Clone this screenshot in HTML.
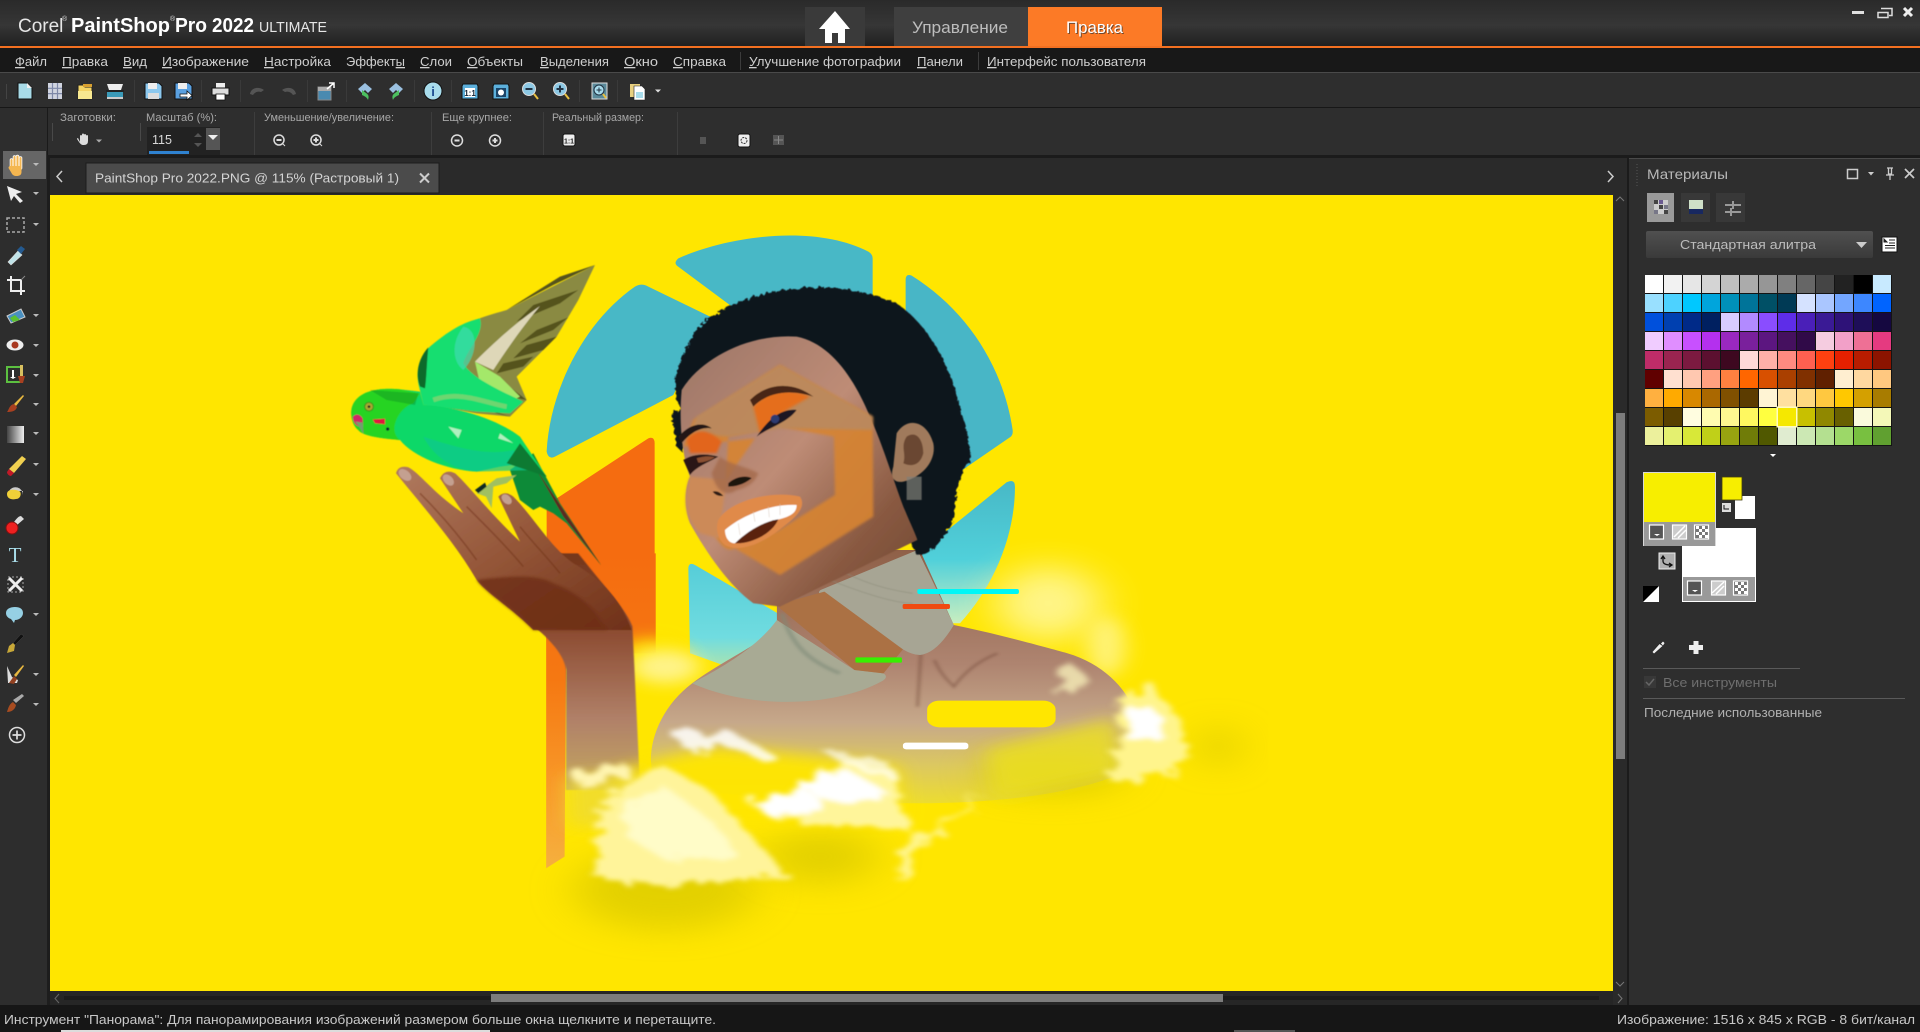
<!DOCTYPE html>
<html><head><meta charset="utf-8"><title>PaintShop Pro 2022</title>
<style>
html,body{margin:0;padding:0;background:#2d2d2d;width:1920px;height:1032px;overflow:hidden}
svg{position:absolute;left:0;top:0;font-family:"Liberation Sans",sans-serif}
#pal{position:absolute;left:1645px;top:275px;width:247px;height:171px;background:#141414;display:grid;grid-template-columns:repeat(13,18px);grid-auto-rows:18px;gap:1px;padding:0 0 0 0}
#pal i{display:block}
#pal i.s{box-shadow:0 0 0 1.5px #fffbc0;position:relative}
</style></head><body>
<svg width="1920" height="1032" viewBox="0 0 1920 1032" xmlns="http://www.w3.org/2000/svg">
<defs>
<linearGradient id="tg" x1="0" y1="0" x2="0" y2="1"><stop offset="0" stop-color="#2a2a2a"/><stop offset=".55" stop-color="#363636"/><stop offset="1" stop-color="#202020"/></linearGradient>
<linearGradient id="dd" x1="0" y1="0" x2="0" y2="1"><stop offset="0" stop-color="#505050"/><stop offset="1" stop-color="#3a3a3a"/></linearGradient>
<linearGradient id="gradT" x1="0" y1="0" x2="1" y2="0"><stop offset="0" stop-color="#444"/><stop offset="1" stop-color="#eee"/></linearGradient>
<linearGradient id="tealF" x1="0" y1="0" x2="0" y2="1"><stop offset="0" stop-color="#48b8c6"/><stop offset=".55" stop-color="#50d0da"/><stop offset="1" stop-color="#c8eec0"/></linearGradient>
<linearGradient id="tealG" x1="0" y1="0" x2="0" y2="1"><stop offset="0" stop-color="#56cdd8"/><stop offset=".6" stop-color="#70dce0"/><stop offset="1" stop-color="#d0e890"/></linearGradient>
<linearGradient id="org" gradientUnits="userSpaceOnUse" x1="0" y1="-20" x2="0" y2="925"><stop offset="0" stop-color="#f56c10"/><stop offset=".4" stop-color="#f57812"/><stop offset=".75" stop-color="#f89a2a"/><stop offset="1" stop-color="#f6b040"/></linearGradient>
<linearGradient id="face" x1="0" y1="0" x2="1" y2="1"><stop offset="0" stop-color="#9c7668"/><stop offset=".45" stop-color="#be8c76"/><stop offset=".75" stop-color="#8a5a42"/><stop offset="1" stop-color="#6e4630"/></linearGradient>
<linearGradient id="arm" x1="0" y1="0" x2="0" y2="1"><stop offset="0" stop-color="#74361c"/><stop offset=".35" stop-color="#8e4e34"/><stop offset=".7" stop-color="#b08068"/><stop offset="1" stop-color="#c4a860"/></linearGradient>
<linearGradient id="hand" x1="0" y1="0" x2="1" y2="1"><stop offset="0" stop-color="#b07a60"/><stop offset=".5" stop-color="#945638"/><stop offset="1" stop-color="#6e3018"/></linearGradient>
<linearGradient id="chest" x1="0" y1="0" x2="0" y2="1"><stop offset="0" stop-color="#8f6048"/><stop offset=".45" stop-color="#ae8470"/><stop offset=".68" stop-color="#c6a88a"/><stop offset=".85" stop-color="#dcc860"/><stop offset="1" stop-color="#ecdc30"/></linearGradient>
<filter id="b1" x="-10%" y="-10%" width="120%" height="120%"><feGaussianBlur stdDeviation="1.6"/></filter>
<filter id="b3" x="-30%" y="-30%" width="160%" height="160%"><feGaussianBlur stdDeviation="4"/></filter>
<filter id="b8" x="-50%" y="-50%" width="200%" height="200%"><feGaussianBlur stdDeviation="12"/></filter>
<filter id="b20" x="-60%" y="-60%" width="220%" height="220%"><feGaussianBlur stdDeviation="22"/></filter>
<filter id="b40" x="-80%" y="-80%" width="260%" height="260%"><feGaussianBlur stdDeviation="45"/></filter>
<filter id="cl" x="-30%" y="-30%" width="160%" height="160%"><feTurbulence type="fractalNoise" baseFrequency=".03" numOctaves="4" seed="4"/><feDisplacementMap in="SourceGraphic" scale="60"/><feGaussianBlur stdDeviation="7"/></filter>
<filter id="hr" x="-10%" y="-10%" width="120%" height="120%"><feTurbulence type="fractalNoise" baseFrequency=".09" numOctaves="2" seed="7"/><feDisplacementMap in="SourceGraphic" scale="16"/><feGaussianBlur stdDeviation="1.5"/></filter>
</defs>

<!-- chrome -->
<rect width="1920" height="46" fill="url(#tg)"/>
<rect y="46" width="1920" height="2" fill="#f37021"/>
<rect y="48" width="1920" height="24" fill="#181818"/>
<rect y="72" width="1920" height="1" fill="#4a4a4a"/>
<rect y="73" width="1920" height="34" fill="#2e2e2e"/>
<rect y="107" width="1920" height="1" fill="#171717"/>
<rect y="108" width="1920" height="47" fill="#2e2e2e"/>
<rect y="155" width="1920" height="3" fill="#1b1b1b"/>
<rect x="48" y="158" width="1581" height="37" fill="#2a2a2a"/>
<rect x="47" y="108" width="1" height="47" fill="#1a1a1a"/>
<rect x="0" y="108" width="47" height="897" fill="#2d2d2d"/>
<rect x="47" y="155" width="3" height="850" fill="#1d1d1d"/>

<!-- title -->
<text y="32" font-size="19" fill="#e6e6e6"><tspan x="18">Corel</tspan></text>
<text x="62" y="21" font-size="7" fill="#ddd">®</text>
<text x="71" y="32" font-size="20" font-weight="bold" fill="#fff" textLength="99" lengthAdjust="spacingAndGlyphs">PaintShop</text>
<text x="170" y="21" font-size="7" fill="#ddd">®</text>
<text x="175" y="32" font-size="20" font-weight="bold" fill="#fff" textLength="32" lengthAdjust="spacingAndGlyphs">Pro</text>
<text x="212" y="32" font-size="20" font-weight="bold" fill="#fff" textLength="42" lengthAdjust="spacingAndGlyphs">2022</text>
<text x="259" y="32" font-size="15" fill="#e6e6e6" textLength="68" lengthAdjust="spacingAndGlyphs">ULTIMATE</text>

<!-- nav tabs -->
<rect x="805" y="7" width="60" height="39" fill="#3a3a3a"/>
<path d="M835 11 L850 29 H845 V43 H838 V33 H832 V43 H825 V29 H819Z" fill="#fff"/>
<rect x="894" y="7" width="134" height="39" fill="#3f3f3f"/>
<text x="912" y="33" font-size="17" fill="#bdbdbd" textLength="96" lengthAdjust="spacingAndGlyphs">Управление</text>
<rect x="1028" y="7" width="134" height="39" fill="#fc7a26"/>
<text x="1066" y="33" font-size="17" fill="#333" opacity=".7" textLength="57" lengthAdjust="spacingAndGlyphs" transform="translate(1,1)">Правка</text>
<text x="1066" y="33" font-size="17" fill="#fff" textLength="57" lengthAdjust="spacingAndGlyphs">Правка</text>

<!-- window buttons -->
<rect x="1852" y="11" width="12" height="3" fill="#e0e0e0"/>
<path d="M1881 8.5h11v7h-3M1878 12.5h10v5h-10z" fill="none" stroke="#ddd" stroke-width="1.5"/>
<path d="M1904 8l8 8M1912 8l-8 8" stroke="#eee" stroke-width="3"/>

<!-- menu -->
<g font-size="13" fill="#cfcfcf">
<text x="15" y="66" textLength="32" lengthAdjust="spacingAndGlyphs"><tspan text-decoration="underline">Ф</tspan>айл</text>
<text x="62" y="66" textLength="46" lengthAdjust="spacingAndGlyphs"><tspan text-decoration="underline">П</tspan>равка</text>
<text x="123" y="66" textLength="24" lengthAdjust="spacingAndGlyphs"><tspan text-decoration="underline">В</tspan>ид</text>
<text x="162" y="66" textLength="87" lengthAdjust="spacingAndGlyphs"><tspan text-decoration="underline">И</tspan>зображение</text>
<text x="264" y="66" textLength="67" lengthAdjust="spacingAndGlyphs"><tspan text-decoration="underline">Н</tspan>астройка</text>
<text x="346" y="66" textLength="59" lengthAdjust="spacingAndGlyphs">Эффект<tspan text-decoration="underline">ы</tspan></text>
<text x="420" y="66" textLength="32" lengthAdjust="spacingAndGlyphs"><tspan text-decoration="underline">С</tspan>лои</text>
<text x="467" y="66" textLength="56" lengthAdjust="spacingAndGlyphs"><tspan text-decoration="underline">О</tspan>бъекты</text>
<text x="540" y="66" textLength="69" lengthAdjust="spacingAndGlyphs"><tspan text-decoration="underline">В</tspan>ыделения</text>
<text x="624" y="66" textLength="34" lengthAdjust="spacingAndGlyphs"><tspan text-decoration="underline">О</tspan>кно</text>
<text x="673" y="66" textLength="53" lengthAdjust="spacingAndGlyphs"><tspan text-decoration="underline">С</tspan>правка</text>
<text x="749" y="66" textLength="152" lengthAdjust="spacingAndGlyphs"><tspan text-decoration="underline">У</tspan>лучшение фотографии</text>
<text x="917" y="66" textLength="46" lengthAdjust="spacingAndGlyphs"><tspan text-decoration="underline">П</tspan>анели</text>
<text x="987" y="66" textLength="159" lengthAdjust="spacingAndGlyphs"><tspan text-decoration="underline">И</tspan>нтерфейс пользователя</text>
</g>
<rect x="740" y="52" width="1" height="18" fill="#3c3c3c"/><rect x="978" y="52" width="1" height="18" fill="#3c3c3c"/>

<!-- toolbar icons -->
<g>
<path d="M18 83h9l5 5v11H18z" fill="#a8dbe8" stroke="#101010"/><path d="M27 83v5h5z" fill="#f0f0f0"/>
<rect x="48" y="83" width="14" height="16" fill="#d0d4e0"/><path d="M52.500 83v16M57.500 83v16M48 88.300h14M48 93.600h14" stroke="#7e88a8" stroke-width="1.200"/>
<path d="M78 85h6l1 2h7v12H78z" fill="#f5d565" stroke="#222"/><path d="M78 91h14v8H78z" fill="#f8e890"/><rect x="83" y="84" width="9" height="3" fill="#d8a030"/>
<path d="M107 84h16l-2 6h-12z" fill="#eee"/><rect x="106" y="90" width="18" height="2" fill="#222"/><rect x="107" y="92" width="16" height="6" fill="#3a9ab8"/><rect x="107" y="97" width="16" height="2" fill="#ccc"/>
<path d="M145 83h14l3 3v13h-17z" fill="#8cc8ee" stroke="#111"/><rect x="148" y="83" width="9" height="6" fill="#eee"/><rect x="148" y="93" width="11" height="6" fill="#ddd"/>
<path d="M175 83h14l3 3v13h-17z" fill="#5aa0e0" stroke="#111"/><rect x="178" y="83" width="9" height="6" fill="#eee"/><path d="M180 94h7v-3l5 4.500-5 4.500v-3h-7z" fill="#fff" stroke="#111" stroke-width=".8"/>
<rect x="216" y="83" width="9" height="5" fill="#eee"/><rect x="212" y="88" width="17" height="7" fill="#ddd" stroke="#111"/><rect x="216" y="94" width="9" height="6" fill="#fff" stroke="#111" stroke-width=".8"/>
<path d="M250 94c1-6 8-8 14-4l-3 2c-3-1-6 0-8 3z" fill="#555"/><path d="M296 94c-1-6-8-8-14-4l3 2c3-1 6 0 8 3z" fill="#555"/>
<rect x="318" y="87" width="13" height="13" fill="#4a8ab0" stroke="#888"/><rect x="318" y="87" width="13" height="4" fill="#aaa"/><path d="M327 89l7-6M329 83h5v5" stroke="#fff" stroke-width="1.500" fill="none"/>
<path d="M358 89l7-6 7 6-4 4-3-3-3 3z" fill="#9ac0e0"/><path d="M362 90l4 3c3 2 3 4 2 7-1-3-4-4-6-5z" fill="#4cc060"/>
<path d="M403 89l-7-6-7 6 4 4 3-3 3 3z" fill="#9ac0e0"/><path d="M399 90l-4 3c-3 2-3 4-2 7 1-3 4-4 6-5z" fill="#4cc060"/>
<circle cx="433" cy="91" r="9" fill="#a8dcec" stroke="#111"/><text x="433" y="96" font-size="13" font-weight="bold" text-anchor="middle" fill="#1a4a90">i</text>
<path d="M463 84h14l1 2v13h-16V86z" fill="#5cb0dc" stroke="#111"/><rect x="465" y="88" width="10" height="9" fill="#fff"/><text x="470" y="96" font-size="8" font-weight="bold" text-anchor="middle" fill="#123">1:1</text>
<path d="M494 84h14l1 2v13h-16V86z" fill="#5cb0dc" stroke="#111"/><rect x="496" y="88" width="10" height="9" fill="#1a4468"/><circle cx="501" cy="92.500" r="3" fill="#fff"/>
<circle cx="529" cy="89" r="6.500" fill="#8cc8e4" stroke="#ddd"/><rect x="525.500" y="88" width="7" height="2" fill="#234"/><path d="M534 94l4 5" stroke="#e8c040" stroke-width="2"/>
<circle cx="560" cy="89" r="6.500" fill="#8cc8e4" stroke="#ddd"/><path d="M556.500 89h7M560 85.500v7" stroke="#234" stroke-width="2"/><path d="M565 94l4 5" stroke="#e8c040" stroke-width="2"/>
<rect x="592" y="83" width="15" height="16" fill="#5a8a9a" stroke="#ddd"/><circle cx="599" cy="90" r="5" fill="#a8dcec" stroke="#234"/><path d="M596.500 90h5M599 87.500v5" stroke="#234"/><path d="M603 94l3 4" stroke="#e8c040" stroke-width="2"/>
<rect x="630" y="84" width="10" height="13" fill="#e8d080"/><path d="M634 86h8l3 3v11h-11z" fill="#fff" stroke="#222" stroke-width=".6"/><rect x="636" y="92" width="7" height="6" fill="#a8dcec"/>
<path d="M655 89.500h6l-3 3z" fill="#ddd"/>
</g>
<g><rect x="6" y="84" width="1" height="15" fill="#444"/><rect x="134" y="80" width="1" height="22" fill="#3a3a3a"/><rect x="201" y="80" width="1" height="22" fill="#3a3a3a"/><rect x="240" y="80" width="1" height="22" fill="#3a3a3a"/><rect x="307" y="80" width="1" height="22" fill="#3a3a3a"/><rect x="346" y="80" width="1" height="22" fill="#3a3a3a"/><rect x="414" y="80" width="1" height="22" fill="#3a3a3a"/><rect x="451" y="80" width="1" height="22" fill="#3a3a3a"/><rect x="579" y="80" width="1" height="22" fill="#3a3a3a"/><rect x="617" y="80" width="1" height="22" fill="#3a3a3a"/></g>

<!-- options -->
<g font-size="11" fill="#a8a8a8">
<text x="60" y="121" textLength="56" lengthAdjust="spacingAndGlyphs">Заготовки:</text>
<text x="146" y="121" textLength="71" lengthAdjust="spacingAndGlyphs">Масштаб (%):</text>
<text x="264" y="121" textLength="130" lengthAdjust="spacingAndGlyphs">Уменьшение/увеличение:</text>
<text x="442" y="121" textLength="70" lengthAdjust="spacingAndGlyphs">Еще крупнее:</text>
<text x="552" y="121" textLength="92" lengthAdjust="spacingAndGlyphs">Реальный размер:</text>
</g>
<g fill="#3d3d3d"><rect x="254" y="112" width="1" height="43"/><rect x="431" y="112" width="1" height="43"/><rect x="543" y="112" width="1" height="43"/><rect x="677" y="112" width="1" height="43"/></g>
<path d="M80 142v-6q0-1 1-1t1 1v-1.500q0-1 1-1t1 1v.500q0-1 1-1t1 1v1q0-1 1-1t1 1v5q0 4-4 4h-1q-2 0-4-3l-2-3q0-1 1-1z" fill="#ddd"/>
<path d="M96 139.500h6l-3 3z" fill="#aaa"/>
<g fill="#555"><rect x="52" y="123" width="1" height="18" opacity=".7"/><rect x="140" y="123" width="1" height="18" opacity=".7"/></g>
<rect x="147" y="127" width="73" height="28" fill="#222"/>
<text x="152" y="144" font-size="13" fill="#d8d8d8" textLength="20" lengthAdjust="spacingAndGlyphs">115</text>
<rect x="149" y="151" width="40" height="3" fill="#2f82d0"/>
<path d="M194 137l4-4 4 4zM194 143l4 4 4-4z" fill="#555"/>
<rect x="206" y="128" width="14" height="22" fill="#555"/><path d="M208 135h10l-5 5z" fill="#eee"/>
<g fill="none" stroke="#ddd" stroke-width="1.500">
<circle cx="279" cy="140" r="5"/><path d="M276.500 140h5" stroke-width="2"/><path d="M283 144l2 2" stroke-width="1"/>
<circle cx="316" cy="140" r="5"/><path d="M313.500 140h5M316 137.500v5" stroke-width="2"/><path d="M320 144l2 2" stroke-width="1"/>
<circle cx="457" cy="140.500" r="5.500"/><path d="M454.500 140.500h5" stroke-width="2"/>
<circle cx="495" cy="140.500" r="5.500"/><path d="M492.500 140.500h5M495 138v5" stroke-width="2"/></g>
<rect x="563" y="134" width="12" height="12" rx="2" fill="#eee" stroke="#111"/><text x="569" y="143.500" font-size="7" font-weight="bold" text-anchor="middle" fill="#222">1:1</text>
<rect x="700" y="137" width="6" height="7" fill="#555"/>
<rect x="738" y="134" width="12" height="13" rx="2" fill="#eee" stroke="#111"/><circle cx="744" cy="140.500" r="3" fill="none" stroke="#333" stroke-dasharray="2 1"/>
<rect x="773" y="135" width="11" height="10" fill="#555"/><path d="M778.500 136v8M774 140h9" stroke="#888"/>

<!-- tab row -->
<path d="M62 171l-5 5.500 5 5.500" fill="none" stroke="#ccc" stroke-width="1.500"/>
<path d="M1608 171l5 5.500-5 5.500" fill="none" stroke="#ccc" stroke-width="1.500"/>
<rect x="86" y="163" width="353" height="30" fill="#4b4b4b" stroke="#1c1c1c"/>
<text x="95" y="182.500" font-size="13" fill="#d4d4d4" textLength="304" lengthAdjust="spacingAndGlyphs">PaintShop Pro 2022.PNG @ 115% (Растровый 1)</text>
<path d="M420 173.500l9 9M429 173.500l-9 9" stroke="#ccc" stroke-width="2"/>

<!-- CANVAS -->
<rect x="50" y="195" width="1563" height="796" fill="#ffe600"/>
<svg x="50" y="195" width="1563" height="796" viewBox="50 195 1563 796">
<!-- teal (zoom9 coords) -->
<g transform="translate(640,220) scale(.3333)">
<path d="M115 115 C260 50 520 10 685 95 Q698 102 698 115 L698 300 L330 300 L112 138 Q100 128 115 115Z" fill="#48b8c6"/>
<path d="M797 180 Q797 160 815 167 C980 270 1090 440 1118 630 Q1120 645 1110 652 L960 755 L797 600Z" fill="#48b6c6"/>
<path d="M1100 787 Q1125 775 1125 800 C1125 950 1060 1100 960 1210 L880 1210 L800 1030Z" fill="url(#tealF)"/>
<path d="M145 1045 Q146 1025 165 1035 L430 1190 L430 1400 L150 1300Z" fill="url(#tealG)"/>
</g>
<!-- orange shape + teal seg 1 (zoom8 coords) -->
<g transform="translate(320,230) scale(.3333)">
<path d="M945 170 Q965 158 985 170 L1175 262 L1060 495 L705 680 Q685 690 680 665 C690 470 800 270 945 170Z" fill="#48b8c6"/>
<path d="M985 625 Q1004 618 1004 640 L1004 1260 L680 1260 L680 825Z" fill="#f56c10"/>
</g>
<g transform="translate(520,560) scale(.4847,.3333)">
<path d="M54 -20 L280 -20 L280 280 L95 280 L92 890 L54 925Z" fill="url(#org)"/>
</g>
<!-- soft haze behind -->
<g transform="translate(520,560) scale(.4847,.3333)">
<ellipse cx="270" cy="290" rx="70" ry="55" fill="#ffe600" opacity=".95" filter="url(#b20)"/>
<ellipse cx="300" cy="320" rx="70" ry="50" fill="#fff6a0" opacity=".85" filter="url(#b20)"/>
<ellipse cx="1090" cy="130" rx="110" ry="110" fill="#fff8a0" opacity=".85" filter="url(#b40)"/>
<ellipse cx="1210" cy="260" rx="40" ry="90" fill="#fff590" opacity=".8" filter="url(#b20)"/>
</g>
<!-- body -->
<g transform="translate(520,560) scale(.4847,.3333)">
<path d="M530 130 L620 -30 L825 -30 L895 195 C980 220 1080 260 1130 280 C1200 310 1250 380 1270 460 L1270 620 C1200 680 1040 730 820 730 C620 730 400 700 275 680 L270 600 C270 520 300 430 355 370 C420 300 500 250 530 200Z" fill="url(#chest)"/>
<g filter="url(#b3)" fill="none" opacity=".45">
<path d="M827 280 L820 440" stroke="#5a3020" stroke-width="5"/>
<path d="M855 300 C870 350 890 370 895 380 C920 330 950 300 985 280" stroke="#6a4030" stroke-width="6"/>
</g>
<!-- grey-green teal overlays -->
<path d="M620 90 L820 -30 L895 195 Q860 280 825 285 Q810 285 790 268 L630 115 Q610 100 620 90Z" fill="#a7a594"/>
<path d="M530 180 L690 330 L750 340 Q762 352 745 365 C650 440 480 450 355 370 C420 320 490 260 530 180Z" fill="#a8aa94"/>
<path d="M528 135 L628 95 L790 268 L750 340 L690 330Z" fill="#ab7144"/>
<path d="M540 160 C560 250 590 300 660 340" stroke="#7e8a78" stroke-width="10" fill="none" opacity=".6" filter="url(#b3)"/>
<path d="M640 60 C690 90 770 130 810 130 M660 30 C710 70 760 90 810 100" stroke="#8a8a78" stroke-width="3" fill="none" opacity=".5" filter="url(#b1)"/>
<!-- forearm -->
<path d="M0 165 C40 210 90 270 95 330 L95 690 L248 690 L232 200 C220 150 180 90 120 -20 L0 -20Z" fill="url(#arm)" filter="url(#b1)"/>
</g>
<!-- hair + face (zoom9 coords) -->
<g transform="translate(640,220) scale(.3333)">
<path filter="url(#hr)" d="M110 540 C90 470 130 400 170 330 C220 270 320 230 400 215 C520 190 650 200 770 250 C860 310 930 430 960 560 C985 650 995 700 990 725 C950 770 950 830 940 900 C900 980 860 1010 830 1005 L700 720 L200 700Z" fill="#11141b"/>
<path filter="url(#hr)" d="M95 580 L135 560 L130 700 L110 680Z" fill="#11141b"/>
<g filter="url(#b1)">
<path d="M125 510 C180 420 320 340 470 350 C570 370 640 470 690 590 C730 680 760 780 790 860 C820 930 830 950 832 960 L420 1160 L340 1150 C270 1100 200 1000 150 910 C130 860 135 800 150 770 C130 720 115 620 125 510Z" fill="url(#face)"/>
<!-- ear -->
<path d="M770 640 C800 590 860 600 880 670 C890 720 850 770 790 785 C760 790 750 770 760 740Z" fill="#a07a5c"/>
<path d="M800 650 C830 630 850 660 850 700 C840 740 810 740 790 730 C800 700 780 680 800 650Z" fill="#6a4630"/>
<rect x="800" y="770" width="45" height="70" fill="#7f7f78" opacity=".7"/>
<!-- orange hex -->
<path filter="url(#b3)" d="M420 435 L698 590 L700 890 L420 1065 L285 985 C260 1000 240 970 225 950 L410 935 L585 825 L582 650 L420 620 L265 650 L258 780 L345 655 L130 680 L160 600Z" fill="#d78432" opacity=".9"/>
<path filter="url(#b3)" d="M420 435 L698 590 L698 630 L420 625 L265 650 L150 640 L170 590Z" fill="#b88a62" opacity=".85"/>
<!-- cheek -->
<path d="M150 770 C125 850 140 900 180 940 L235 955 L260 780Z" fill="#cc8a58" filter="url(#b3)"/>
<!-- eye shadows -->
<path d="M140 660 C170 620 210 630 245 665 L230 700 L150 700Z" fill="#e2651e" filter="url(#b3)"/>
<path d="M340 560 C390 500 470 510 510 530 L440 570 L360 640Z" fill="#e56e1c" filter="url(#b3)"/>
<!-- brows -->
<path d="M115 650 C150 610 190 605 215 625 C180 620 150 640 125 670Z" fill="#241812"/>
<path d="M330 540 C390 480 470 490 520 530 C460 510 390 510 340 560Z" fill="#4a2612"/>
<!-- eyes -->
<path d="M350 650 C390 590 430 565 470 570 C440 610 390 620 350 650Z" fill="#1a1420"/><circle cx="405" cy="597" r="13" fill="#2e3a70"/>
<path d="M130 720 C160 700 200 700 235 710 C200 730 170 740 150 765Z" fill="#2a1812"/><path d="M170 715 Q200 705 225 712 Q200 728 175 728Z" fill="#8a5030"/>
<!-- nose -->
<path d="M215 760 C230 820 260 830 290 810 C340 800 350 770 355 760 C320 740 260 730 240 710Z" fill="#a46a4c" opacity=".8" filter="url(#b3)"/>
<path d="M265 790 C285 770 320 765 335 775 C310 795 285 800 265 800Z" fill="#1e1210"/>
<path d="M218 815 Q235 810 250 828 Q228 830 218 815Z" fill="#2e1a12"/>
<!-- mouth -->
<path d="M235 900 C270 840 400 810 480 830 C500 860 470 890 430 920 C370 970 300 1000 255 975 C235 960 225 930 235 900Z" fill="#e08a4a"/>
<path d="M255 930 C300 890 390 850 470 855 C470 880 450 890 410 900 C370 920 320 940 285 970 C265 970 255 950 255 930Z" fill="#fff"/>
<path d="M285 970 C320 935 370 905 415 898 C400 935 350 965 300 970Z" fill="#5a2010"/>
<path d="M340 875L345 905M385 860L388 892M420 852L420 885M295 910L300 945" stroke="#d8c8b8" stroke-width="1.500"/>
</g>
</g>
<!-- bird + hand (zoom8 coords) -->
<g transform="translate(320,230) scale(.3333)" filter="url(#b1)">
<!-- hand -->
<path d="M228 730 Q235 705 265 712 C300 730 340 790 430 850 L360 745 Q375 715 405 730 C440 760 510 850 600 935 L535 800 Q555 780 580 800 C640 860 690 950 760 1000 C830 1040 900 1100 935 1200 L640 1200 C570 1130 500 1090 470 1050 C400 930 300 820 228 730Z" fill="url(#hand)"/>
<path d="M470 1050 C560 1040 650 1030 700 1060 C780 1090 830 1140 860 1200 L640 1200 C570 1130 500 1090 470 1050Z" fill="#6e2e18" opacity=".8" filter="url(#b3)"/>
<path d="M300 790 C360 850 420 920 470 990 M440 830 C500 890 560 950 610 1010 M600 890 C640 940 680 980 720 1030" stroke="#6e3018" stroke-width="5" fill="none" opacity=".45"/>
<ellipse cx="255" cy="735" rx="22" ry="14" fill="#c4a090" transform="rotate(40 255 735)"/>
<ellipse cx="385" cy="750" rx="20" ry="13" fill="#c4a090" transform="rotate(45 385 750)"/>
<ellipse cx="560" cy="808" rx="18" ry="12" fill="#c4a090" transform="rotate(45 560 808)"/>
<!-- tail -->
<path d="M570 720 L640 670 L720 820 L843 1005 L740 880 L700 850 L660 830 L640 840 L600 810Z" fill="#0a8a38"/>
<path d="M650 720 L843 1005 L730 860Z" fill="#5a2a20"/>
<path d="M470 790 L530 745 L590 735 L560 760 L520 770 L515 835 L498 800Z" fill="#a0c060"/>
<path d="M465 780 l30 -22 l5 12 l-25 20z" fill="#102a20"/>
<!-- wing -->
<path d="M300 480 C285 430 295 385 330 350 C400 290 470 265 560 240 L825 105 L775 210 L710 320 L590 440 L620 510 L570 560 L470 550 L310 520Z" fill="#8a8a42"/>
<g fill="#55521c">
<path d="M825 105 L720 140 L560 240 L700 165Z"/><path d="M775 180 L640 225 L590 275 L720 220Z"/><path d="M745 262 L650 300 L600 340 L700 300Z"/><path d="M710 320 L620 345 L580 385 L670 360Z"/><path d="M640 380 L550 400 L530 430 L610 410Z"/><path d="M620 510 L530 440 L570 500Z"/><path d="M570 560 L480 530 L530 550Z"/>
</g>
<path d="M660 228 C600 270 540 320 465 395 L520 420 C560 360 600 300 660 228Z" fill="#ded7b8"/>
<path d="M465 395 L540 440 L600 500 L540 530 L480 460Z" fill="#a4e86a"/>
<path d="M300 480 C285 430 295 385 330 350 C400 290 440 275 480 265 C495 310 440 360 430 400 C460 450 560 490 610 515 L570 550 L470 545 L310 525Z" fill="#17de70"/>
<path d="M430 290 C480 300 470 380 430 420 C400 400 390 340 430 290Z" fill="#40dcb0" opacity=".7"/>
<path d="M300 470 C285 430 295 385 325 352 C320 400 320 440 315 475Z" fill="#0a6a2a"/>
<path d="M340 510 C420 480 500 520 560 530" stroke="#a8d070" stroke-width="14" fill="none" opacity=".6"/>
<!-- body -->
<path d="M95 535 C105 495 150 470 240 478 L300 485 L310 525 C400 530 520 560 600 620 L680 740 L610 700 L540 710 L470 725 C380 720 280 680 240 630 C190 625 130 620 115 600 C100 590 90 560 95 535Z" fill="#0ed868"/>
<path d="M95 535 C105 495 150 470 240 478 L300 490 L280 520 C240 530 200 600 240 630 C190 625 130 620 115 600 C100 590 90 560 95 535Z" fill="#26d420"/>
<path d="M150 480 L295 490 L285 525 L200 510Z" fill="#0f8a20" opacity=".4"/>
<path d="M310 620 C400 650 500 680 580 660 L640 720 L470 725 C400 720 340 680 310 620Z" fill="#10c890" opacity=".7"/>
<path d="M385 590l40 10-10 25zM540 610l40 30-45-15z" fill="#b0f0c0"/>
<path d="M600 640 L680 740 L560 700Z" fill="#087a30"/>
<circle cx="147" cy="530" r="13" fill="#a8a830" stroke="#3a8a20" stroke-width="3"/><circle cx="147" cy="530" r="4" fill="#222"/>
<path d="M98 560 Q115 545 128 565 L130 610 L118 590 Q100 585 98 560Z" fill="#d02868"/><path d="M105 575 L128 578 L130 612 L118 590Z" fill="#70a070"/>
<path d="M158 568 L195 566 L195 583 L165 580Z" fill="#e01840"/>
<circle cx="203" cy="597" r="5" fill="#123"/>
</g>
<!-- clouds -->
<g transform="translate(520,560) scale(.4847,.3333)">
<ellipse cx="300" cy="990" rx="190" ry="120" fill="#d8c800" opacity=".7" filter="url(#b40)"/>
<ellipse cx="620" cy="890" rx="120" ry="80" fill="#d8c800" opacity=".7" filter="url(#b40)"/>
<ellipse cx="1100" cy="640" rx="150" ry="60" fill="#d8c800" opacity=".8" filter="url(#b40)"/>
<ellipse cx="1440" cy="560" rx="40" ry="60" fill="#d8c800" opacity=".7" filter="url(#b40)"/>
<!-- yellow wash over chest -->
<path filter="url(#b20)" d="M280 600 L400 560 L600 590 L780 620 L790 780 L500 800 L180 800 L200 640Z" fill="#ffe600" opacity=".95"/>
<path filter="url(#b20)" d="M95 650 L250 630 L250 800 L100 800Z" fill="#f0dc30" opacity=".85"/>
<path filter="url(#b20)" d="M960 570 L1230 470 L1240 640 L980 720Z" fill="#ece020" opacity=".8"/>
<g filter="url(#cl)">
<path d="M170 720 L290 610 L390 690 L470 820 L550 940 L300 980 L150 950 Z" fill="#fff49a"/>
<path d="M220 730 L300 680 L400 790 L450 890 L300 900 L210 820Z" fill="#fffcc8"/>
<path d="M470 730 L590 670 L660 600 L770 640 L810 820 L720 800 L620 790 L530 780Z" fill="#fff59a"/>
<path d="M580 680 L670 625 L760 700 L650 730Z" fill="#fff"/>
<path d="M490 720 L600 690 L625 755 L510 770Z" fill="#fff"/>
<path d="M300 500 L380 520 L440 520 L530 590 L510 610 L440 560 L340 570Z" fill="#fff" opacity=".85"/>
<path d="M620 570 L760 600 L780 660 L680 620Z" fill="#fff" opacity=".7"/>
<path d="M1230 440 L1300 360 L1360 480 L1380 600 L1280 670 L1210 660 L1240 560Z" fill="#fff48c"/>
<path d="M1245 450 L1305 440 L1335 535 L1255 540Z" fill="#fff"/>
<path d="M770 960 L810 950 L820 870 L930 740 L950 690 L880 780 L790 860 Z" fill="#fff48c"/>
<path d="M110 640 L220 610 L230 650 L120 680Z" fill="#fff4b0"/>
<path d="M1130 300 L1180 370 L1100 410Z" fill="#fffbc0" opacity=".7"/>
</g>
<rect x="692" y="292" width="96" height="16" rx="3" fill="#38f000"/>
<rect x="840" y="422" width="265" height="80" rx="26" fill="#ffe600"/>
<rect x="790" y="548" width="135" height="20" rx="7" fill="#fff"/>
</g>
<g transform="translate(640,220) scale(.3333)">
<rect x="832" y="1107" width="305" height="15" rx="6" fill="#00f6f6"/>
<rect x="788" y="1152" width="142" height="15" rx="5" fill="#f04a10"/>
</g>
</svg>

<!-- scrollbars -->
<rect x="1613" y="195" width="16" height="810" fill="#2a2a2a"/>
<rect x="1616" y="413" width="9" height="346" fill="#7c7c7c"/>
<path d="M1616 201l4-4 4 4M1616 982l4 4 4-4" stroke="#777" fill="none"/>
<rect x="50" y="991" width="1563" height="14" fill="#262626"/>
<rect x="64" y="996" width="1535" height="4" fill="#1c1c1c"/>
<rect x="491" y="994" width="732" height="8" fill="#7c7c7c"/>
<path d="M59 994l-4 4.500 4 4.500" stroke="#666" fill="none"/><path d="M1618 994l4 4.500-4 4.500" stroke="#777" fill="none"/>
<rect x="1627" y="158" width="2" height="847" fill="#1b1b1b"/>

<!-- materials panel -->
<rect x="1629" y="158" width="291" height="847" fill="#2e2e2e"/>
<rect x="1629" y="158" width="291" height="1" fill="#4a4a4a"/>
<path d="M1637 164v24" stroke="#555" stroke-dasharray="1 2"/>
<text x="1647" y="179" font-size="14" fill="#b8b8b8" textLength="81" lengthAdjust="spacingAndGlyphs">Материалы</text>
<rect x="1847.500" y="169.500" width="10" height="9" fill="none" stroke="#ccc" stroke-width="1.500"/>
<path d="M1868 172h6l-3 3.500z" fill="#ccc"/>
<path d="M1887 168h6M1888.500 168v6h3v-6M1886 175h8M1890 175v5" stroke="#ccc" stroke-width="1.300" fill="none"/>
<path d="M1905 169l9 9M1914 169l-9 9" stroke="#ccc" stroke-width="1.700"/>
<rect x="1647" y="193" width="27" height="29" fill="#9a9a9a"/>
<g transform="translate(1654,200)"><rect width="14" height="14" fill="#ccc"/><path d="M0 0h4v4H0zM5 5h4v4H5zM10 10h4v4h-4z" fill="#444"/><path d="M5 0h4v4H5z" fill="#6a5a90"/><path d="M10 5h4v4h-4zM0 10h4v4H0z" fill="#778"/></g>
<rect x="1681" y="193" width="29" height="29" fill="#383838"/>
<rect x="1689" y="200" width="14" height="14" fill="#cfe0c8"/><rect x="1689" y="209" width="14" height="5" fill="#182860"/>
<rect x="1716" y="193" width="29" height="29" fill="#383838"/>
<path d="M1725 205h16M1725 212h16M1733 201v8M1731 208v8" stroke="#999" stroke-width="2"/>
<rect x="1646" y="231" width="227" height="27" rx="2" fill="url(#dd)"/>
<text x="1680" y="249" font-size="13" fill="#bcbcbc" textLength="136" lengthAdjust="spacingAndGlyphs">Стандартная алитра</text>
<path d="M1856 242h11l-5.500 6z" fill="#ccc"/>
<rect x="1882" y="237" width="15" height="15" fill="#fff" stroke="#111"/>
<path d="M1884 239l3 3 -3 0zM1889 240h6M1889 243h6M1885 245.500h10M1885 248h10" stroke="#222" fill="#222"/>
<path d="M1770 454h6l-3 3z" fill="#fff"/>

<!-- colour pickers -->
<rect x="1682" y="528" width="74" height="74" fill="#fff"/>
<rect x="1683" y="577" width="72" height="24" fill="#999"/>
<rect x="1643" y="472" width="73" height="74" fill="#d8d8d8"/>
<rect x="1644" y="473" width="71" height="49" fill="#f7ee00"/>
<rect x="1644" y="522" width="71" height="24" fill="#999"/>
<g stroke="#fff" stroke-width="1.200">
<rect x="1649.500" y="525" width="14" height="14" fill="#555"/><rect x="1672.500" y="525" width="14" height="14" fill="#ccc"/><rect x="1694.500" y="525" width="14" height="14" fill="#777"/>
<rect x="1687.500" y="581" width="14" height="14" fill="#555"/><rect x="1711.500" y="581" width="14" height="14" fill="#ccc"/><rect x="1733.500" y="581" width="14" height="14" fill="#777"/>
</g>
<path d="M1674 537l11-11M1678 538l8-8M1712 593l12-11M1716 594l8-8" stroke="#fff" stroke-width="1.500"/>
<g fill="#fff"><path d="M1696 526h3v3h-3zM1702 526h3v3h-3zM1699 529h3v3h-3zM1705 529h3v3h-3zM1696 532h3v3h-3zM1702 532h3v3h-3zM1699 535h3v3h-3zM1705 535h3v3h-3z"/><path d="M1735 582h3v3h-3zM1741 582h3v3h-3zM1738 585h3v3h-3zM1744 585h3v3h-3zM1735 588h3v3h-3zM1741 588h3v3h-3zM1738 591h3v3h-3zM1744 591h3v3h-3z"/></g>
<path d="M1654 534h6l-3 2zM1692 590h6l-3 2z" fill="#fff"/>
<rect x="1735" y="496" width="20" height="23" fill="#fff"/>
<rect x="1722" y="477" width="20" height="23" fill="#f7ee00" stroke="#44400a" stroke-width=".8"/>
<rect x="1722" y="503" width="9" height="9" fill="#ddd"/><path d="M1724 505v4h5" stroke="#111" fill="none"/>
<rect x="1659" y="553" width="16" height="16" fill="#b0b0b0" stroke="#eee"/>
<path d="M1663 557v4c0 3 3 4 8 4M1661 559l2-3 2 3M1669 563l3 2-3 2" stroke="#111" stroke-width="1.300" fill="none"/>
<rect x="1643" y="586" width="16" height="16" fill="#fff"/><path d="M1643 586h16l-16 16z" fill="#000"/>
<path d="M1652 652l8-9 3 3-9 8zM1660 644l3-3 2 2-2 3z" fill="#eee" stroke="#222" stroke-width=".6"/>
<path d="M1693.500 641h5v4h4.500v5h-4.500v4h-5v-4H1689v-5h4.500z" fill="#eee"/>
<rect x="1643" y="668" width="157" height="1" fill="#5a5a5a"/>
<rect x="1644" y="676" width="12" height="12" fill="#383838"/><path d="M1646 682l3 3 5-6" stroke="#666" stroke-width="1.500" fill="none"/>
<text x="1663" y="687" font-size="13" fill="#6e6e6e" textLength="114" lengthAdjust="spacingAndGlyphs">Все инструменты</text>
<rect x="1643" y="698" width="262" height="1" fill="#5a5a5a"/>
<text x="1644" y="717" font-size="13" fill="#b0b0b0" textLength="178" lengthAdjust="spacingAndGlyphs">Последние использованные</text>

<!-- tools -->
<rect x="3" y="151" width="43" height="28" fill="#666"/>
<g fill="#bbb">
<path d="M33 163h6l-3 3zM33 192h6l-3 3zM33 223h6l-3 3zM33 314h6l-3 3zM33 344h6l-3 3zM33 374h6l-3 3zM33 403h6l-3 3zM33 432h6l-3 3zM33 463h6l-3 3zM33 493h6l-3 3zM33 613h6l-3 3zM33 673h6l-3 3zM33 703h6l-3 3z"/>
</g>
<g stroke-linecap="round" fill="none">
<path d="M11.500 160v8M14.500 157v10M17.500 156.500v10M20.500 158v10" stroke="#fff" stroke-width="3.600"/>
<path d="M11.500 160v8M14.500 157v10M17.500 156.500v10M20.500 158v10" stroke="#f4b650" stroke-width="2"/>
</g>
<path d="M10.500 166h11v6c0 3-2 4-5 4-2.500 0-4-1-5-3l-3-5q0-2 2-2z" fill="#f4b650"/>
<path d="M7 186l15 6-6 2 7 7-3 2-6-7-3 5z" fill="#eee"/>
<rect x="7" y="218" width="17" height="14" fill="none" stroke="#aaa" stroke-width="1.500" stroke-dasharray="3 2"/>
<path d="M8 262l10-11 4 4-11 10z" fill="#bfe3e8" stroke="#ddd" stroke-width=".6"/><path d="M17 250l4-4 4 3-4 5z" fill="#245a90"/>
<path d="M11 276v15h14M7 280h14v15" fill="none" stroke="#eee" stroke-width="2"/><path d="M21 280l4-4" stroke="#888"/>
<path d="M7 316l14-7 4 8-14 6z" fill="#4a90c0" stroke="#ccc"/><path d="M10 318l5-3 5 5-7 2z" fill="#5cc030"/>
<ellipse cx="15" cy="345" rx="8.500" ry="5.500" fill="#eee"/><circle cx="15" cy="345" r="3.500" fill="#a83820"/>
<rect x="7" y="367" width="14" height="15" fill="none" stroke="#5cc040" stroke-width="2"/><rect x="20" y="365" width="3" height="11" fill="#d8c060"/><path d="M18 376h7l-2 7h-3z" fill="#a84020"/><path d="M12 370v7h-2l3 2 3-2h-2v-7" fill="#fff"/>
<path d="M24 396l-8 10-2-2 9-9z" fill="#e8b840"/><path d="M14 404l3 3c-1 4-5 5-10 5 2-2 2-7 7-8z" fill="#a84020"/>
<rect x="7" y="426" width="17" height="17" fill="url(#gradT)"/>
<path d="M22 456l4 3-12 14-5-4z" fill="#f0d050"/><path d="M9 469l5 4-3 3c-2 0-4-2-4-4z" fill="#c01a28"/>
<path d="M23 495a7.500 7.500 0 0 0-14-4l14 0z" fill="#ccc"/><path d="M7 494c0-5 8-5 12-3 3 1 2 8-3 8-4 1-9 0-9-5z" fill="#f0d038"/>
<path d="M24 519l-3-3c-3 0-6 5-7 6l3 3z" fill="#ddd"/><circle cx="12" cy="528" r="6" fill="#ee2020" stroke="#801010"/>
<text x="15" y="562" font-family="Liberation Serif,serif" font-size="21" text-anchor="middle" fill="#a8dce8">T</text>
<rect x="8" y="577" width="15" height="15" fill="none" stroke="#aaa" stroke-dasharray="2 2"/><path d="M9 578l13 13M22 578l-13 13" stroke="#eee" stroke-width="3"/>
<path d="M15 607c5 0 8 2 8 6s-4 7-8 7l-1 3-3-4c-3-1-5-3-5-6 0-4 4-6 9-6z" fill="#96d0e4"/>
<path d="M24 636l-9 9-2-2 8-9z" fill="#111" stroke="#444" stroke-width=".5"/><path d="M13 643l2 2-1 6-7 2 2-7z" fill="#c8a838"/>
<path d="M7 666l5 11 6 3-1 3-9 0z" fill="#ddd"/><path d="M24 666l-8 11-2-2 9-10z" fill="#e8b840"/><path d="M14 676l3 3-3 5-5-1z" fill="#904020"/>
<path d="M24 696l-8 7-3-3 9-6z" fill="#aaa"/><path d="M13 702l3 3c-1 5-5 7-9 7 1-3 2-8 6-10z" fill="#a84c20"/>
<circle cx="17" cy="735" r="7.500" fill="none" stroke="#ddd" stroke-width="1.500"/><path d="M12.500 735h9M17 730.500v9" stroke="#ddd" stroke-width="1.700"/>

<!-- status bar -->
<rect y="1005" width="1920" height="27" fill="#161616"/>
<text x="4" y="1024" font-size="13" fill="#c8c8c8" textLength="712" lengthAdjust="spacingAndGlyphs">Инструмент "Панорама": Для панорамирования изображений размером больше окна щелкните и перетащите.</text>
<text x="1617" y="1024" font-size="13" fill="#c8c8c8" textLength="298" lengthAdjust="spacingAndGlyphs">Изображение:  1516 x 845 x RGB - 8 бит/канал</text>
<rect x="61" y="1030" width="429" height="2" fill="#dcdcdc"/>
<rect x="1234" y="1030" width="61" height="2" fill="#555"/>
</svg>

<div id="pal">
<i style="background:#fff"></i><i style="background:#f2f2f2"></i><i style="background:#e6e6e6"></i><i style="background:#d4d4d4"></i><i style="background:#bfbfbf"></i><i style="background:#ababab"></i><i style="background:#969696"></i><i style="background:#808080"></i><i style="background:#666"></i><i style="background:#454545"></i><i style="background:#222"></i><i style="background:#000"></i><i style="background:#c8eaff"></i>
<i style="background:#99e0ff"></i><i style="background:#4dd2ff"></i><i style="background:#00c8ff"></i><i style="background:#00a5dc"></i><i style="background:#0090b9"></i><i style="background:#007499"></i><i style="background:#005066"></i><i style="background:#003a55"></i><i style="background:#d5e2ff"></i><i style="background:#aac6ff"></i><i style="background:#73a6ff"></i><i style="background:#3d87ff"></i><i style="background:#0064ff"></i>
<i style="background:#0050dc"></i><i style="background:#0040b0"></i><i style="background:#002a88"></i><i style="background:#002060"></i><i style="background:#d8ccff"></i><i style="background:#b28aff"></i><i style="background:#8a4dff"></i><i style="background:#5e2de8"></i><i style="background:#4a1fb8"></i><i style="background:#3a1a95"></i><i style="background:#2e1278"></i><i style="background:#1e0e58"></i><i style="background:#150840"></i>
<i style="background:#f0ccff"></i><i style="background:#e08eff"></i><i style="background:#c850ff"></i><i style="background:#b430ee"></i><i style="background:#9a28c0"></i><i style="background:#7a209c"></i><i style="background:#5c1680"></i><i style="background:#45105f"></i><i style="background:#300a48"></i><i style="background:#f5cce0"></i><i style="background:#f2a0c8"></i><i style="background:#ee7095"></i><i style="background:#e53a80"></i>
<i style="background:#be2c68"></i><i style="background:#9a2450"></i><i style="background:#7c1a40"></i><i style="background:#5c1030"></i><i style="background:#3e0820"></i><i style="background:#ffd8d8"></i><i style="background:#ffb0a8"></i><i style="background:#ff8a80"></i><i style="background:#ff6050"></i><i style="background:#ff4010"></i><i style="background:#e62000"></i><i style="background:#b81c00"></i><i style="background:#8c1400"></i>
<i style="background:#600000"></i><i style="background:#ffe0d0"></i><i style="background:#ffc8b0"></i><i style="background:#ffa080"></i><i style="background:#ff8040"></i><i style="background:#f60"></i><i style="background:#d85000"></i><i style="background:#aa4000"></i><i style="background:#803000"></i><i style="background:#602000"></i><i style="background:#ffeed0"></i><i style="background:#ffd8a0"></i><i style="background:#ffc880"></i>
<i style="background:#ffb040"></i><i style="background:#fa0"></i><i style="background:#d88800"></i><i style="background:#aa6800"></i><i style="background:#805000"></i><i style="background:#5c3c00"></i><i style="background:#fff4d4"></i><i style="background:#ffe0a0"></i><i style="background:#ffd880"></i><i style="background:#ffc840"></i><i style="background:#ffc800"></i><i style="background:#d4a000"></i><i style="background:#a87c00"></i>
<i style="background:#7c5c00"></i><i style="background:#584000"></i><i style="background:#fffde0"></i><i style="background:#fffcb0"></i><i style="background:#fff890"></i><i style="background:#fff860"></i><i style="background:#ffff40"></i><i class="s" style="background:#f5e800"></i><i style="background:#c8c000"></i><i style="background:#908800"></i><i style="background:#686000"></i><i style="background:#fafadc"></i><i style="background:#f4f8b8"></i>
<i style="background:#ecf09c"></i><i style="background:#e4f070"></i><i style="background:#d8e838"></i><i style="background:#c0d018"></i><i style="background:#98a410"></i><i style="background:#707c08"></i><i style="background:#505800"></i><i style="background:#e0ecd0"></i><i style="background:#cce8b4"></i><i style="background:#b4e090"></i><i style="background:#9cd868"></i><i style="background:#78c040"></i><i style="background:#60a030"></i>
</div>
</body></html>
